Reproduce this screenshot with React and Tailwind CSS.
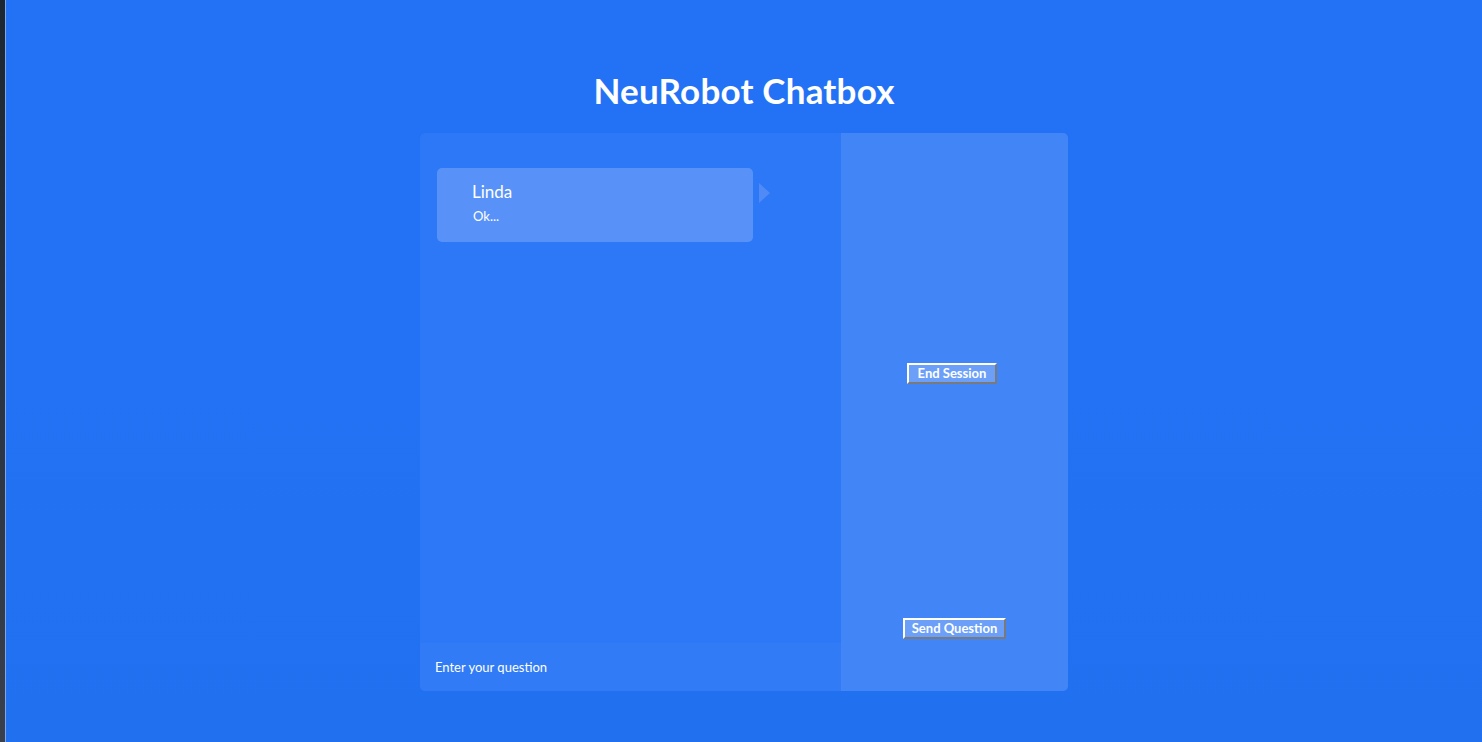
// Chat window: message list + question input on the left, session controls on the right.
const messages = [{ id: 1, name: 'Linda', text: 'Ok...' }];

function Bubble({ name, text }) {
  return (
    <div className="flex items-start">
      <div className="h-[74px] w-[316px] rounded-[5px] bg-[#5892f8] pl-[35px] pt-[12px] text-white">
        <p className="text-[17px] leading-[24px]">{name}</p>
        <p className="mt-[3px] pl-[1px] text-[13px] leading-[18px]">{text}</p>
      </div>
      <div className="ml-[6px] mt-[15px] h-0 w-0 border-y-[10px] border-l-[11px] border-y-transparent border-l-[#4f8af7]" />
    </div>
  );
}

function OldButton({ children, className = '' }) {
  return (
    <button
      className={`h-[21px] border-2 border-t-white border-l-white border-b-[#7a7a7a] border-r-[#7a7a7a] bg-[#6c9ff8] text-[13px] font-bold leading-[15px] text-white ${className}`}
    >
      {children}
    </button>
  );
}

export default function App() {
  return (
    <div className="flex h-[742px] w-full overflow-hidden font-['Lato','Liberation_Sans',sans-serif]">
      <div className="w-[5px] bg-gradient-to-b from-[#1d2633] via-[#2a3442] to-[#3a3f4c]" />
      <div className="w-[1px] bg-[#7ea6ee]" />
      <main className="flex flex-1 flex-col items-center bg-gradient-to-b from-[#2372f5] via-[#2372f5] to-[#2170f0] pt-[69px]">
        <h1 className="text-[35px] font-bold leading-[42px] tracking-[0.2px] text-white">NeuRobot Chatbox</h1>
        <section className="mt-[22px] flex h-[558px] w-[648px] overflow-hidden rounded-[5px] bg-[#2c78f6]">
          <div className="flex w-[421px] flex-col">
            <div className="flex-1 pl-[17px] pt-[35px]">
              {messages.map((m) => (
                <Bubble key={m.id} name={m.name} text={m.text} />
              ))}
            </div>
            <div className="flex h-[48px] items-center bg-[#317bf6] pl-[15px] pt-[1px]">
              <span className="text-[13px] text-white">Enter your question</span>
            </div>
          </div>
          <div className="flex flex-1 flex-col items-center bg-[#4285f6] pt-[230px]">
            <OldButton className="-ml-[5px] px-[9px]">End Session</OldButton>
            <OldButton className="mt-[234px] px-[7px]">Send Question</OldButton>
          </div>
        </section>
      </main>
    </div>
  );
}
